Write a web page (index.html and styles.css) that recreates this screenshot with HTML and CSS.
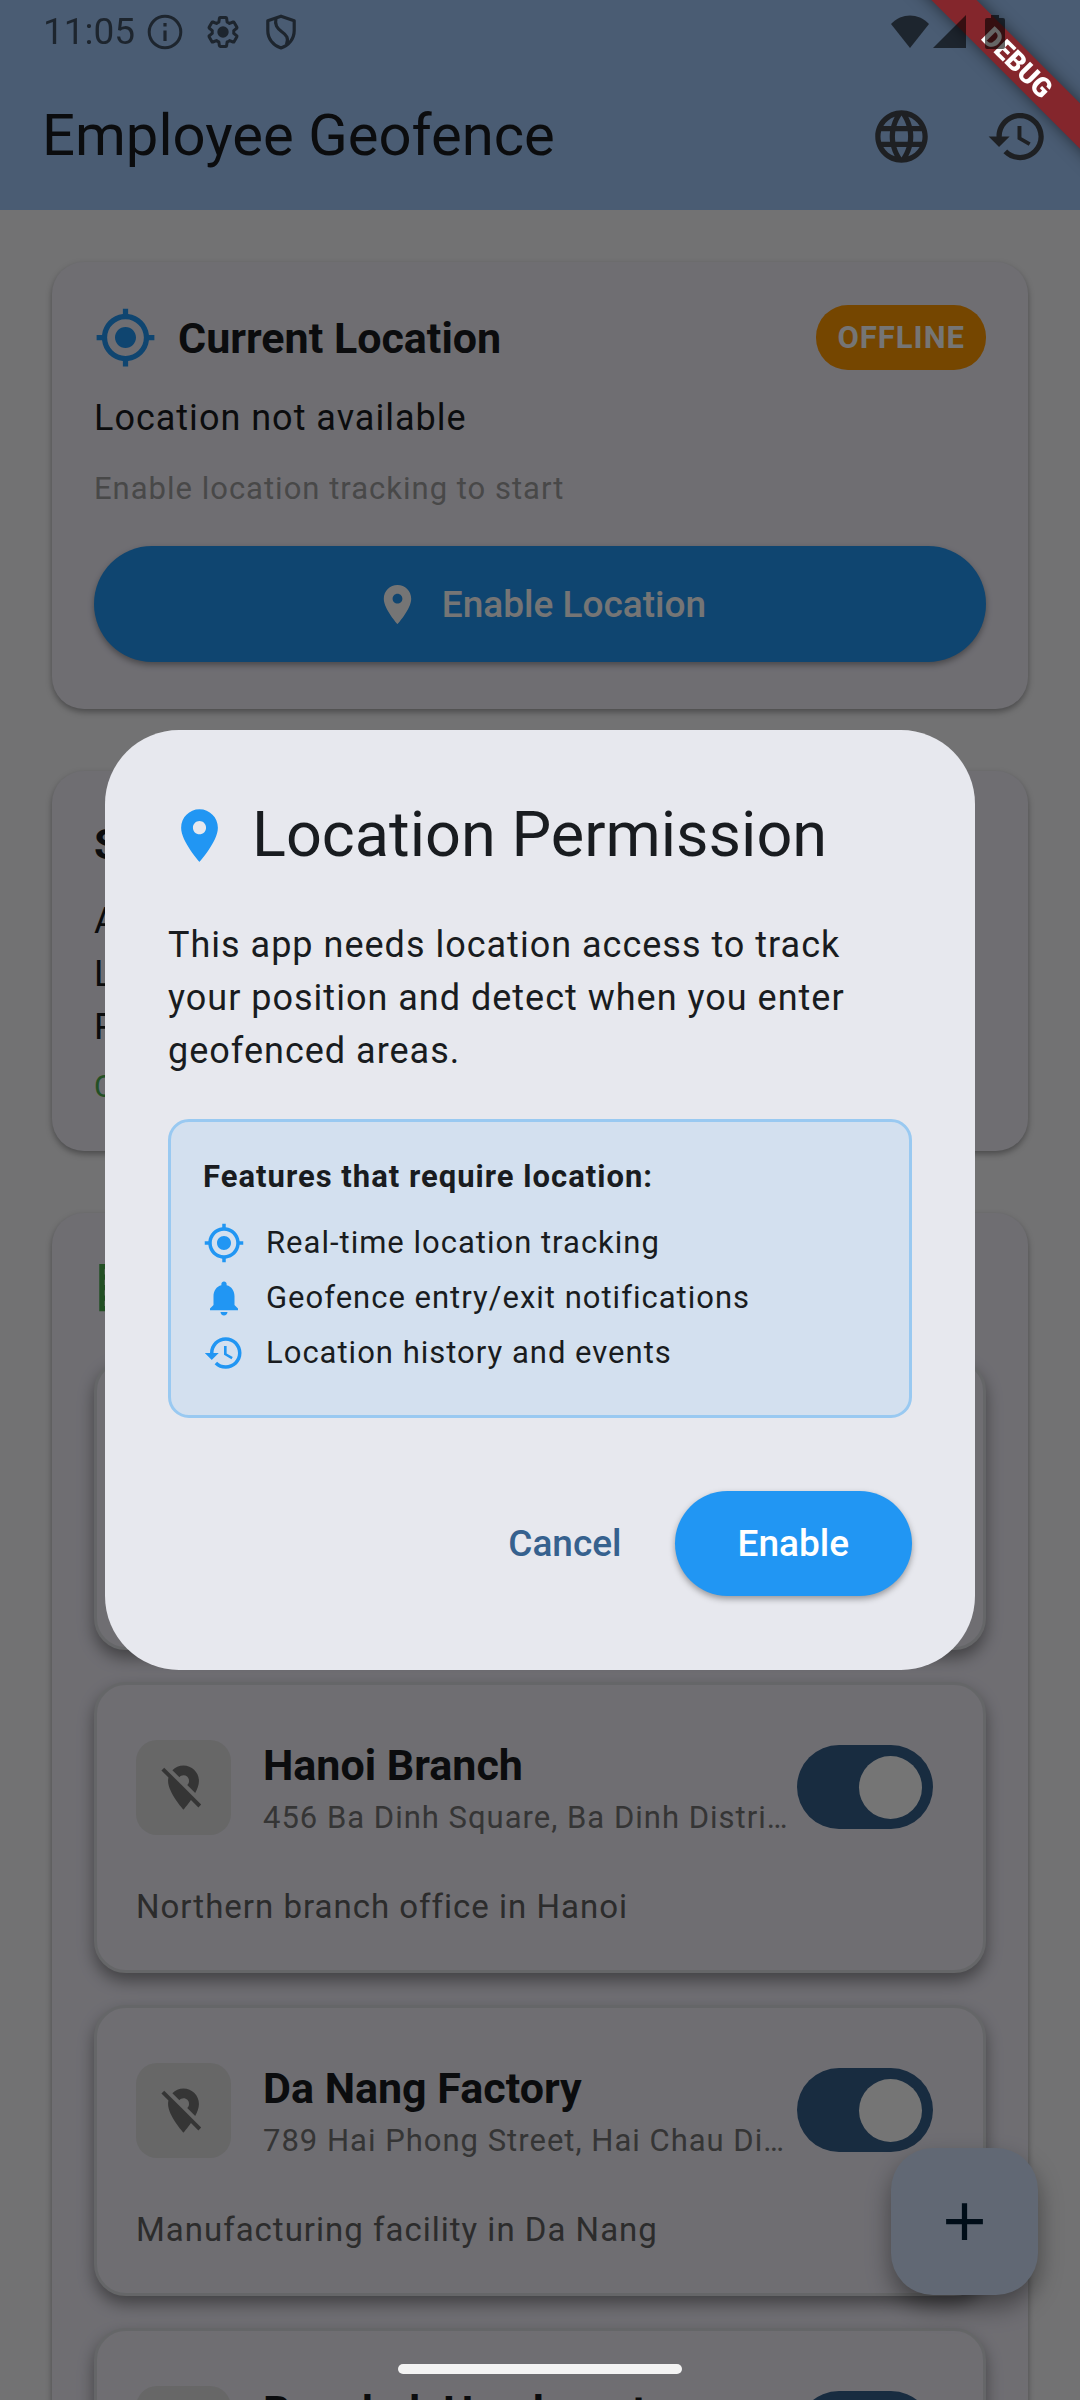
FILE: index.html
```html
<!DOCTYPE html>
<html lang="en">
<head>
<meta charset="utf-8">
<meta name="viewport" content="width=device-width, initial-scale=1">
<title>Employee Geofence</title>
<link rel="stylesheet" href="styles.css">
</head>
<body>
<svg class="sprite" aria-hidden="true">
  <symbol id="i-target" viewBox="0 0 24 24"><path d="M12 8c-2.21 0-4 1.79-4 4s1.79 4 4 4 4-1.79 4-4-1.79-4-4-4zm8.94 3c-.46-4.17-3.77-7.48-7.94-7.94V1h-2v2.06C6.83 3.52 3.52 6.83 3.06 11H1v2h2.06c.46 4.17 3.77 7.48 7.94 7.94V23h2v-2.06c4.17-.46 7.48-3.77 7.94-7.94H23v-2h-2.06zM12 19c-3.87 0-7-3.13-7-7s3.13-7 7-7 7 3.13 7 7-3.13 7-7 7z"/></symbol>
  <symbol id="i-history" viewBox="0 0 24 24"><path d="M13 3c-4.97 0-9 4.03-9 9H1l3.89 3.89.07.14L9 12H6c0-3.87 3.13-7 7-7s7 3.13 7 7-3.13 7-7 7c-1.93 0-3.68-.79-4.94-2.06l-1.42 1.42C8.27 19.99 10.51 21 13 21c4.97 0 9-4.03 9-9s-4.03-9-9-9zm-1 5v5l4.28 2.54.72-1.21-3.5-2.08V8H12z"/></symbol>
  <symbol id="i-pin" viewBox="0 0 24 24"><path d="M12 2C8.13 2 5 5.13 5 9c0 5.25 7 13 7 13s7-7.75 7-13c0-3.87-3.13-7-7-7zm0 9.5c-1.38 0-2.5-1.12-2.5-2.5s1.12-2.5 2.5-2.5 2.5 1.12 2.5 2.5-1.12 2.5-2.5 2.5z"/></symbol>
  <symbol id="i-pin-off" viewBox="0 0 24 24"><path d="M12 6.5c1.38 0 2.5 1.12 2.5 2.5 0 .74-.33 1.39-.83 1.85l3.63 3.63c.98-1.86 1.7-3.8 1.7-5.48 0-3.87-3.13-7-7-7-1.98 0-3.76.83-5.04 2.15l3.19 3.19c.46-.52 1.11-.84 1.85-.84zm4.37 9.6l-4.63-4.63-.11-.11L3.27 3 2 4.27l3.18 3.18C5.07 7.95 5 8.47 5 9c0 5.25 7 13 7 13s1.67-1.85 3.38-4.35L18.73 21 20 19.73l-3.63-3.63z"/></symbol>
  <symbol id="i-bell" viewBox="0 0 24 24"><path d="M12 22c1.1 0 2-.9 2-2h-4c0 1.1.89 2 2 2zm6-6v-5c0-3.07-1.64-5.64-4.5-6.32V4c0-.83-.67-1.5-1.5-1.5s-1.5.67-1.5 1.5v.68C7.63 5.36 6 7.92 6 11v5l-2 2v1h16v-1l-2-2z"/></symbol>
  <symbol id="i-business" viewBox="0 0 24 24"><path d="M12 7V3H2v18h20V7H12zM6 19H4v-2h2v2zm0-4H4v-2h2v2zm0-4H4V9h2v2zm0-4H4V5h2v2zm4 12H8v-2h2v2zm0-4H8v-2h2v2zm0-4H8V9h2v2zm0-4H8V5h2v2zm10 12h-8v-2h2v-2h-2v-2h2v-2h-2V9h8v10zm-2-8h-2v2h2v-2zm0 4h-2v2h2v-2z"/></symbol>
  <symbol id="i-globe" viewBox="0 0 24 24"><path d="M11.99 2C6.47 2 2 6.48 2 12s4.47 10 9.99 10C17.52 22 22 17.52 22 12S17.52 2 11.99 2zm6.93 6h-2.95c-.32-1.25-.78-2.45-1.38-3.56 1.84.63 3.37 1.91 4.33 3.56zM12 4.04c.83 1.2 1.48 2.53 1.91 3.96h-3.82c.43-1.43 1.08-2.76 1.91-3.96zM4.26 14C4.1 13.36 4 12.69 4 12s.1-1.36.26-2h3.38c-.08.66-.14 1.32-.14 2 0 .68.06 1.34.14 2H4.26zm.82 2h2.95c.32 1.25.78 2.45 1.38 3.56-1.84-.63-3.37-1.9-4.33-3.56zm2.95-8H5.08c.96-1.66 2.49-2.93 4.33-3.56C8.81 5.55 8.35 6.75 8.03 8zM12 19.96c-.83-1.2-1.48-2.53-1.91-3.96h3.82c-.43 1.43-1.08 2.76-1.91 3.96zM14.34 14H9.66c-.09-.66-.16-1.32-.16-2 0-.68.07-1.35.16-2h4.68c.09.65.16 1.32.16 2 0 .68-.07 1.34-.16 2zm.25 5.56c.6-1.11 1.06-2.31 1.38-3.56h2.95c-.96 1.65-2.49 2.93-4.33 3.56zM16.36 14c.08-.66.14-1.32.14-2 0-.68-.06-1.34-.14-2h3.38c.16.64.26 1.31.26 2s-.1 1.36-.26 2h-3.38z"/></symbol>
  <symbol id="i-plus" viewBox="0 0 24 24"><path d="M19 13h-6v6h-2v-6H5v-2h6V5h2v6h6v2z"/></symbol>
</svg>

<div class="app">
  <header class="app-bar">
    <h1 class="app-title">Employee Geofence</h1>
    <button class="icon-button" type="button" aria-label="Language"><svg class="icon-24"><use href="#i-globe"/></svg></button>
    <button class="icon-button" type="button" aria-label="History"><svg class="icon-24"><use href="#i-history"/></svg></button>
  </header>

  <main class="content">
    <section class="card">
      <div class="card-head">
        <svg class="icon-24 blue"><use href="#i-target"/></svg>
        <h2 class="heading">Current Location</h2>
        <span class="badge">OFFLINE</span>
      </div>
      <p class="body-text location-line">Location not available</p>
      <p class="small-text hint">Enable location tracking to start</p>
      <button class="button button-wide" type="button"><svg class="icon-18"><use href="#i-pin"/></svg>Enable Location</button>
    </section>

    <section class="card">
      <h2 class="heading">Status</h2>
      <div class="body-text status-lines">
        <p>Active: 5</p>
        <p>Location: Off</p>
        <p>Permission: No</p>
      </div>
      <p class="small-text online">Connected</p>
    </section>

    <section class="card">
      <div class="card-head">
        <svg class="icon-24 green"><use href="#i-business"/></svg>
        <h2 class="heading">Geofences</h2>
      </div>
      <ul class="fence-list">
        <li class="fence">
          <div class="fence-row">
            <span class="fence-tile"><svg class="icon-20"><use href="#i-pin-off"/></svg></span>
            <div class="fence-text">
              <label class="heading" for="fence-1">Main Office</label>
              <p class="small-text address">123 Nguyen Hue Street</p>
            </div>
            <input class="switch" type="checkbox" id="fence-1" checked>
          </div>
          <p class="fence-note">Head office building</p>
        </li>
        <li class="fence">
          <div class="fence-row">
            <span class="fence-tile"><svg class="icon-20"><use href="#i-pin-off"/></svg></span>
            <div class="fence-text">
              <label class="heading" for="fence-2">Hanoi Branch</label>
              <p class="small-text address">456 Ba Dinh Square, Ba Dinh District, Hanoi</p>
            </div>
            <input class="switch" type="checkbox" id="fence-2" checked>
          </div>
          <p class="fence-note">Northern branch office in Hanoi</p>
        </li>
        <li class="fence">
          <div class="fence-row">
            <span class="fence-tile"><svg class="icon-20"><use href="#i-pin-off"/></svg></span>
            <div class="fence-text">
              <label class="heading" for="fence-3">Da Nang Factory</label>
              <p class="small-text address">789 Hai Phong Street, Hai Chau District, Da Nang</p>
            </div>
            <input class="switch" type="checkbox" id="fence-3" checked>
          </div>
          <p class="fence-note">Manufacturing facility in Da Nang</p>
        </li>
        <li class="fence">
          <div class="fence-row">
            <span class="fence-tile"><svg class="icon-20"><use href="#i-pin-off"/></svg></span>
            <div class="fence-text">
              <label class="heading" for="fence-4">Bangkok Headquarters</label>
              <p class="small-text address">Sukhumvit Road, Bangkok</p>
            </div>
            <input class="switch" type="checkbox" id="fence-4" checked>
          </div>
          <p class="fence-note">Regional office in Bangkok</p>
        </li>
      </ul>
    </section>
  </main>

  <button class="fab" type="button" aria-label="Add geofence"><svg class="icon-24"><use href="#i-plus"/></svg></button>
</div>

<div class="scrim">
  <div class="dialog" role="dialog" aria-modal="true" aria-labelledby="dialog-title">
    <div class="dialog-head">
      <svg class="icon-24 blue"><use href="#i-pin"/></svg>
      <h2 class="dialog-title" id="dialog-title">Location Permission</h2>
    </div>
    <p class="body-text dialog-body">This app needs location access to track your position and detect when you enter geofenced areas.</p>
    <div class="features">
      <h3 class="small-text features-title">Features that require location:</h3>
      <ul class="feature-list small-text">
        <li class="feature"><svg class="icon-16 blue"><use href="#i-target"/></svg>Real-time location tracking</li>
        <li class="feature"><svg class="icon-16 blue"><use href="#i-bell"/></svg>Geofence entry/exit notifications</li>
        <li class="feature"><svg class="icon-16 blue"><use href="#i-history"/></svg>Location history and events</li>
      </ul>
    </div>
    <div class="actions">
      <button class="text-button" type="button">Cancel</button>
      <button class="button" type="button">Enable</button>
    </div>
  </div>
</div>

<div class="debug-corner"><span class="debug-ribbon">DEBUG</span></div>

<div class="status-bar">
  <time class="clock">11:05</time>
  <svg class="status-icon" viewBox="0 0 36 36"><circle cx="18" cy="18" r="15.8" fill="none" stroke="currentColor" stroke-width="3"/><path d="M16.4 9h3.2v3.4h-3.2zM16.4 16.4h3.2V27h-3.2z"/></svg>
  <svg class="status-icon" viewBox="0 0 24 24"><path fill="none" stroke="currentColor" stroke-width="2" stroke-linejoin="round" d="M19.14 12.94c.04-.3.06-.61.06-.94 0-.32-.02-.64-.07-.94l2.03-1.58c.18-.14.23-.41.12-.61l-1.92-3.32c-.12-.22-.37-.29-.59-.22l-2.39.96c-.5-.38-1.03-.7-1.62-.94l-.36-2.54c-.04-.24-.24-.41-.48-.41h-3.84c-.24 0-.43.17-.47.41l-.36 2.54c-.59.24-1.13.57-1.62.94l-2.39-.96c-.22-.08-.47 0-.59.22L2.74 8.87c-.12.21-.08.47.12.61l2.03 1.58c-.05.3-.09.63-.09.94s.02.64.07.94l-2.03 1.58c-.18.14-.23.41-.12.61l1.92 3.32c.12.22.37.29.59.22l2.39-.96c.5.38 1.03.7 1.62.94l.36 2.54c.05.24.24.41.48.41h3.84c.24 0 .44-.17.47-.41l.36-2.54c.59-.24 1.13-.56 1.62-.94l2.39.96c.22.08.47 0 .59-.22l1.92-3.32c.12-.22.07-.47-.12-.61l-2.01-1.58z"/><circle cx="12" cy="12" r="3.8"/></svg>
  <svg class="status-icon" viewBox="0 0 36 36"><path fill="none" stroke="currentColor" stroke-width="3.2" stroke-linejoin="round" d="M18 2.2 4.8 6.8v10C4.8 24.500 10 31.500 18 34c8-2.500 13.200-9.500 13.200-17.200v-10zM13 4.500C11.500 11 14 14 18.500 17.500 23.500 21 26 24 23.500 30.500"/></svg>
  <span class="status-gap"></span>
  <svg class="wifi" viewBox="0 0 40 36"><path d="M1 10C12-1.300 28-1.300 39 10L20 34z"/></svg>
  <svg class="signal" viewBox="0 0 33 36"><path d="M33 1v33H0z"/></svg>
  <svg class="battery" viewBox="0 0 20 36"><path d="M6 1h8v3h4a2 2 0 0 1 2 2v27a2 2 0 0 1-2 2H2a2 2 0 0 1-2-2V6a2 2 0 0 1 2-2h4z"/></svg>
</div>

<div class="home-pill"></div>
</body>
</html>
```
FILE: styles.css
```css
* {
  box-sizing: border-box;
}

body {
  margin: 0;
  font-family: Roboto, "Noto Sans", sans-serif;
  color: #191c20;
  background: #f8f8fa;
}

h1, h2, h3, p, ul {
  margin: 0;
  padding: 0;
}

ul {
  list-style: none;
}

button {
  font: inherit;
  border: 0;
  cursor: pointer;
}

svg {
  display: block;
  flex: none;
  fill: currentColor;
}

.sprite {
  display: none;
}

.icon-16 { width: 42px; height: 42px; }
.icon-18 { width: 47px; height: 47px; }
.icon-20 { width: 53px; height: 53px; }
.icon-24 { width: 63px; height: 63px; }

.blue { color: #2196f3; }
.green { color: #4caf50; }

.app {
  position: relative;
  height: 100vh;
  overflow: hidden;
}

/* App bar */

.app-bar {
  display: flex;
  align-items: center;
  height: 210px;
  padding: 63px 0 0 42px;
  background: #a1c9fa;
}

.app-title {
  flex: 1;
  padding-bottom: 4px;
  font-size: 58px;
  font-weight: 400;
  line-height: 74px;
}

.icon-button {
  display: grid;
  place-items: center;
  width: 116px;
  height: 126px;
  padding: 0;
  color: #43474e;
  background: none;
}

.icon-button:last-child {
  margin-right: 5px;
}

/* Text styles */

.heading {
  display: block;
  font-size: 43px;
  font-weight: 700;
  line-height: 60px;
}

.body-text {
  font-size: 36px;
  line-height: 53px;
  letter-spacing: 1px;
}

.small-text {
  font-size: 31px;
  line-height: 45px;
  letter-spacing: 1px;
}

/* Cards */

.content {
  display: flex;
  flex-direction: column;
  gap: 62px;
  padding: 52px;
}

.card {
  padding: 43px 42px 42px;
  border-radius: 32px;
  background: #f1eff9;
  box-shadow: 0 3px 6px rgba(0, 0, 0, 0.35);
}

.card-head {
  display: flex;
  align-items: center;
  gap: 21px;
}

.badge {
  margin-left: auto;
  padding: 10px 21px;
  border-radius: 32px;
  font-size: 31px;
  font-weight: 700;
  line-height: 45px;
  letter-spacing: 1px;
  color: #fff;
  background: #ff9800;
}

.location-line {
  margin-top: 22px;
}

.hint {
  margin-top: 21px;
  color: #9e9e9e;
}

.button {
  display: flex;
  align-items: center;
  justify-content: center;
  gap: 21px;
  min-height: 105px;
  padding: 0 63px;
  border-radius: 58px;
  font-size: 37px;
  font-weight: 500;
  color: #fff;
  background: #2196f3;
  box-shadow: 0 3px 6px rgba(0, 0, 0, 0.35);
}

.button-wide {
  width: 100%;
  min-height: 116px;
  margin: 35px 0 5px;
}

.status-lines {
  margin-top: 21px;
}

.online {
  margin-top: 10px;
  color: #4caf50;
}

/* Geofence list */

.fence-list {
  display: flex;
  flex-direction: column;
  gap: 32px;
  margin-top: 40px;
}

.fence {
  padding: 39px;
  border: 3px solid #dddfe2;
  border-radius: 32px;
  background: #f1eff9;
  box-shadow: 0 8px 16px rgba(0, 0, 0, 0.4);
}

.fence-row {
  display: flex;
  align-items: center;
  min-height: 126px;
  padding-right: 11px;
}

.fence-tile {
  display: grid;
  flex: none;
  place-items: center;
  width: 95px;
  height: 95px;
  margin-right: 32px;
  border-radius: 21px;
  color: #757575;
  background: #e0e0e0;
}

.fence-text {
  flex: 1;
  min-width: 0;
}

.address {
  overflow: hidden;
  white-space: nowrap;
  text-overflow: ellipsis;
  color: #757575;
}

.switch {
  appearance: none;
  display: grid;
  flex: none;
  align-items: center;
  justify-items: end;
  width: 136px;
  height: 84px;
  margin: 0 0 0 4px;
  padding: 0 11px;
  border-radius: 42px;
  background: #36608b;
}

.switch::before {
  content: "";
  width: 63px;
  height: 63px;
  border-radius: 50%;
  background: #fff;
}

.fence-note {
  margin-top: 32px;
  font-size: 33px;
  line-height: 49px;
  letter-spacing: 1px;
  color: #616161;
}

.fab {
  position: absolute;
  right: 42px;
  bottom: 105px;
  display: grid;
  place-items: center;
  width: 147px;
  height: 147px;
  padding: 0;
  border-radius: 42px;
  color: #001d36;
  background: #d3e3fd;
  box-shadow: 0 12px 24px rgba(0, 0, 0, 0.4);
}

/* Dialog */

.scrim {
  position: fixed;
  inset: 0;
  display: grid;
  align-items: center;
  padding: 0 105px;
  background: rgba(0, 0, 0, 0.54);
}

.dialog {
  padding: 63px 63px 74px;
  border-radius: 74px;
  background: #e7e8ee;
}

.dialog-head {
  display: flex;
  align-items: center;
  gap: 21px;
}

.dialog-title {
  font-size: 63px;
  font-weight: 400;
  line-height: 84px;
}

.dialog-body {
  margin-top: 42px;
}

.features {
  margin-top: 41px;
  padding: 32px 32px 40px;
  border: 3px solid #99c9f1;
  border-radius: 21px;
  background: #d3e0ef;
}

.features-title {
  font-weight: 700;
}

.feature-list {
  display: flex;
  flex-direction: column;
  gap: 10px;
  margin-top: 21px;
}

.feature {
  display: flex;
  align-items: center;
  gap: 21px;
}

.actions {
  display: flex;
  justify-content: flex-end;
  gap: 21px;
  margin-top: 73px;
}

.text-button {
  padding: 0 32px;
  font-size: 37px;
  font-weight: 500;
  color: #36618e;
  background: none;
}

/* Debug ribbon, drawn over the app's corner */

.debug-corner {
  position: absolute;
  top: 0;
  right: 0;
  width: 220px;
  height: 220px;
  overflow: hidden;
}

.debug-ribbon {
  position: absolute;
  top: 47px;
  right: -87px;
  width: 300px;
  transform: rotate(45deg);
  font-size: 27px;
  font-weight: 900;
  line-height: 32px;
  text-align: center;
  color: #fff;
  background: #84262c;
  box-shadow: 0 0 16px rgba(0, 0, 0, 0.5);
}

/* System bars, over everything */

.status-bar {
  position: absolute;
  top: 0;
  left: 0;
  right: 0;
  display: flex;
  align-items: center;
  height: 63px;
  padding: 0 75px 0 43px;
  color: rgba(0, 0, 0, 0.6);
}

.clock {
  margin-right: 12px;
  font-size: 37px;
  line-height: 63px;
}

.status-icon {
  width: 36px;
  height: 36px;
  margin-right: 22px;
}

.status-gap {
  flex: 1;
}

.wifi { width: 40px; height: 36px; margin-right: 3px; }
.signal { width: 33px; height: 36px; margin-right: 19px; }
.battery { width: 20px; height: 36px; }

.home-pill {
  position: fixed;
  left: 50%;
  bottom: 26px;
  width: 284px;
  height: 10px;
  margin-left: -142px;
  border-radius: 5px;
  background: #f3f3f3;
}
```
